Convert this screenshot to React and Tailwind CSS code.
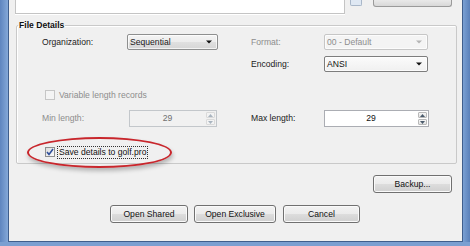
import React from 'react';

const font = { fontFamily: '"Liberation Sans", Arial, sans-serif' };

function Arrow({ disabled }) {
  return (
    <svg width="6" height="4" viewBox="0 0 6 4" className="shrink-0">
      <path d="M0 0.5 H6 L3 3.5 Z" fill={disabled ? '#b4b4b4' : '#111'} />
    </svg>
  );
}

function Combo({ value, width, variant }) {
  const styles = {
    button:
      'border-[#8e8f8f] bg-[linear-gradient(#f4f4f4_0%,#ececec_50%,#e0e0e0_50%,#d6d6d6_100%)] text-[#1b1b1b]',
    disabled: 'border-[#c6c6c6] bg-[#f4f4f4] text-[#8d8d8d]',
    field: 'border-[#7d7d7d] bg-[linear-gradient(#fbfbfb,#f0f0f0)] text-[#111]',
  };
  return (
    <div
      className={`h-[16px] ${width} flex items-center justify-between pl-[2px] pr-[5px] border rounded-[2px] shadow-[inset_0_0_0_1px_rgba(255,255,255,0.7)] ${styles[variant]}`}
    >
      <span className="leading-none">{value}</span>
      <Arrow disabled={variant === 'disabled'} />
    </div>
  );
}

function SpinBtn({ up, disabled }) {
  return (
    <div
      className={`flex-1 flex items-center justify-center border rounded-[1px] ${
        disabled ? 'border-[#dadada] bg-[#f3f3f3]' : 'border-[#b9b9b9] bg-[linear-gradient(#f6f6f6,#e2e2e2)]'
      }`}
    >
      <svg width="5" height="3" viewBox="0 0 5 3">
        <path d={up ? 'M0 3 L2.5 0 L5 3 Z' : 'M0 0 H5 L2.5 3 Z'} fill={disabled ? '#a9b4bf' : '#4a5a6b'} />
      </svg>
    </div>
  );
}

function Spinner({ value, width, disabled }) {
  return (
    <div
      className={`h-[17px] ${width} flex border ${
        disabled ? 'border-[#c3c7cb] bg-[#f1f1f1] text-[#6f6f6f]' : 'border-[#abadb3] bg-white text-[#111]'
      }`}
    >
      <div className="flex-1 flex items-center justify-center leading-none">{value}</div>
      <div className="w-[11px] flex flex-col p-[1px] gap-[1px]">
        <SpinBtn up disabled={disabled} />
        <SpinBtn disabled={disabled} />
      </div>
    </div>
  );
}

function Check({ checked, disabled, label, focused }) {
  return (
    <div className="flex items-center ml-[3px] h-[12px]">
      <div
        className={`w-[10px] h-[10px] border flex items-center justify-center ${
          disabled ? 'border-[#c6c6c6] bg-[#f4f4f4]' : 'border-[#8f8f8f] bg-[linear-gradient(135deg,#dcdcdc,#fbfbfb)]'
        }`}
      >
        {checked && (
          <svg width="8" height="8" viewBox="0 0 8 8">
            <path d="M1 4 L3 6.5 L7 1" stroke="#2f4f9a" strokeWidth="1.6" fill="none" />
          </svg>
        )}
      </div>
      <span
        className={`ml-[2px] px-[1px] leading-[11px] border border-dotted ${
          focused ? 'border-[#333]' : 'border-transparent'
        } ${disabled ? 'text-[#8d8d8d]' : 'text-[#111]'}`}
      >
        {label}
      </span>
    </div>
  );
}

function Button({ children, width }) {
  return (
    <button
      className={`h-[18px] ${width} border border-[#707070] rounded-[3px] bg-[linear-gradient(#f3f3f3_0%,#ebebeb_50%,#dddddd_50%,#d0d0d0_100%)] shadow-[inset_0_0_0_1px_#fafafa] text-[#111] leading-none`}
    >
      {children}
    </button>
  );
}

export default function App() {
  return (
    <div className="w-[470px] h-[246px] flex flex-col bg-[#7b9fd1] text-[8.6px]" style={font}>
      <div className="flex h-[242px]">
        <div className="w-[8px] bg-[linear-gradient(90deg,#5e85bf,#84a8d8)]" />
        <div className="w-[455px] bg-[#f0f0f0] border-l border-r border-b border-[#3f5e8c] relative flex flex-col">
          {/* Top strip (cut off) */}
          <div className="flex h-[14px] ml-[6px]">
            <div className="w-[330px] h-[14px] bg-white border border-t-0 border-[#c4c4c4] shadow-[0_1px_0_#fff]" />
            <div className="ml-[5px] w-[12px] h-[6px] border border-t-0 border-[#a9b7c9] bg-[#dfe8f3] rounded-b-[2px]" />
            <div className="ml-[11px] w-[79px] h-[7px] border border-t-0 border-[#9a9a9a] bg-[linear-gradient(#e9e9e9,#d8d8d8)] rounded-b-[3px]" />
          </div>

          {/* File Details group */}
          <fieldset className="ml-[7px] mt-[5px] w-[441px] border border-[#c9c9c9] rounded-[2px] pb-[5px] shadow-[inset_1px_1px_0_#fff]">
            <legend className="ml-[1px] px-[1px] font-bold leading-[12px] text-[#111]">File Details</legend>

            <div className="pl-[25px]">
              <div className="flex items-center h-[16px] mt-[3px]">
                <span className="w-[85px] text-[#1b1b1b]">Organization:</span>
                <Combo value="Sequential" width="w-[91px]" variant="button" />
                <span className="w-[33px]" />
                <span className="w-[73px] text-[#8d8d8d]">Format:</span>
                <Combo value="00 - Default" width="w-[104px]" variant="disabled" />
              </div>

              <div className="flex items-center h-[16px] mt-[6px]">
                <span className="w-[209px]" />
                <span className="w-[73px] text-[#1b1b1b]">Encoding:</span>
                <Combo value="ANSI" width="w-[104px]" variant="field" />
              </div>

              <div className="mt-[17px]">
                <Check disabled label="Variable length records" />
              </div>

              <div className="flex items-center h-[17px] mt-[9px]">
                <span className="w-[87px] text-[#8d8d8d]">Min length:</span>
                <Spinner value="29" width="w-[88px]" disabled />
                <span className="w-[34px]" />
                <span className="w-[73px] text-[#1b1b1b]">Max length:</span>
                <Spinner value="29" width="w-[105px]" />
              </div>

              <div className="mt-[19px]">
                <Check checked focused label="Save details to golf.pro" />
              </div>
            </div>
          </fieldset>

          {/* Annotation ellipse */}
          <div className="absolute left-[18px] top-[137px] w-[145px] h-[31px] rounded-[50%] border-2 border-[#c8262c] shadow-[1px_3px_4px_rgba(0,0,0,0.25)]" />

          <div className="flex justify-end mt-[11px] mr-[10px]">
            <Button width="w-[79px]">Backup...</Button>
          </div>

          <div className="flex mt-[12px] ml-[101px]">
            <Button width="w-[78px]">Open Shared</Button>
            <div className="ml-[6px]">
              <Button width="w-[82px]">Open Exclusive</Button>
            </div>
            <div className="ml-[7px]">
              <Button width="w-[77px]">Cancel</Button>
            </div>
          </div>
        </div>
        <div className="w-[7px] bg-[linear-gradient(90deg,#7aa0d3,#5a80b9)]" />
      </div>
      <div className="h-[4px] bg-[#7b9fd1]" />
    </div>
  );
}
